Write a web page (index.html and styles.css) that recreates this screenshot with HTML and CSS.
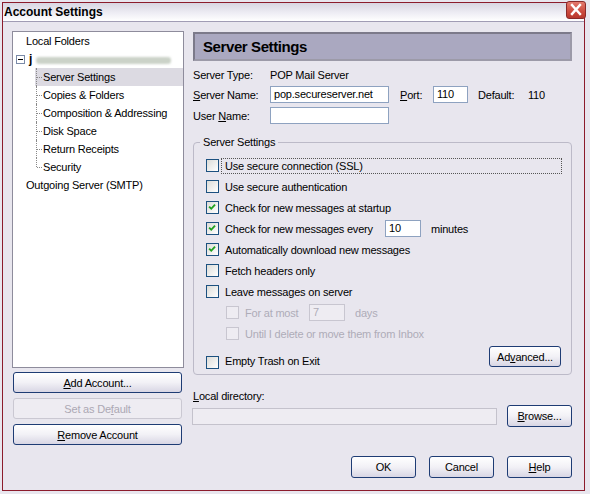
FILE: index.html
```html
<!DOCTYPE html>
<html>
<head>
<meta charset="utf-8">
<title>Account Settings</title>
<link rel="stylesheet" href="styles.css">
</head>
<body>
<div class="window">
   <!-- title bar -->
   <div class="titlebar">
      <span class="title">Account Settings</span>
      <span class="close">
         <svg viewBox="0 0 20 18" width="20" height="18">
            <path d="M6 4 L14 13 M14 4 L6 13" stroke="#fff" stroke-width="2.4" stroke-linecap="square"/>
         </svg>
      </span>
   </div>

   <div class="main">
      <!-- account tree -->
      <div class="leftcol">
         <div class="tree">
            <div class="treeitem top">Local Folders</div>
            <div class="treeitem account">
               <span class="minus"></span>
               <span class="acctname">j</span>
               <span class="redacted"></span>
            </div>
            <div class="subitem selected">Server Settings</div>
            <div class="subitem">Copies &amp; Folders</div>
            <div class="subitem">Composition &amp; Addressing</div>
            <div class="subitem">Disk Space</div>
            <div class="subitem">Return Receipts</div>
            <div class="subitem last">Security</div>
            <div class="treeitem top">Outgoing Server (SMTP)</div>
         </div>
         <button class="xpbutton side"><u>A</u>dd Account...</button>
         <button class="xpbutton side" disabled>Set as De<u>f</u>ault</button>
         <button class="xpbutton side"><u>R</u>emove Account</button>
      </div>

      <!-- settings pane -->
      <div class="rightcol">
         <div class="paneheader">Server Settings</div>

         <div class="formrow first">
            <span class="formlabel">Server Type:</span>
            <span>POP Mail Server</span>
         </div>
         <div class="formrow">
            <span class="formlabel"><u>S</u>erver Name:</span>
            <span class="textbox hostbox">pop.secureserver.net</span>
            <span class="portlabel"><u>P</u>ort:</span>
            <span class="textbox portbox">110</span>
            <span class="defaultlabel">Default:</span>
            <span>110</span>
         </div>
         <div class="formrow">
            <span class="formlabel">User <u>N</u>ame:</span>
            <span class="textbox hostbox"></span>
         </div>

         <fieldset class="group">
            <legend>Server Settings</legend>
            <div class="checkrows">
               <div class="checkrow">
                  <span class="cb"></span>
                  <span class="cblabel focused">Use secure connection (SSL)</span>
               </div>
               <div class="checkrow">
                  <span class="cb"></span>
                  <span class="cblabel">Use secure authentication</span>
               </div>
               <div class="checkrow">
                  <span class="cb checked"><svg viewBox="0 0 13 13" width="11" height="11"><path d="M2.5 5.5 L5 8 L9.5 3" fill="none" stroke="#21a121" stroke-width="2.2"/></svg></span>
                  <span class="cblabel">Check for new messages at startup</span>
               </div>
               <div class="checkrow">
                  <span class="cb checked"><svg viewBox="0 0 13 13" width="11" height="11"><path d="M2.5 5.5 L5 8 L9.5 3" fill="none" stroke="#21a121" stroke-width="2.2"/></svg></span>
                  <span class="cblabel everylabel">Check for new messages every</span>
                  <span class="textbox smallbox">10</span>
                  <span class="unit">minutes</span>
               </div>
               <div class="checkrow">
                  <span class="cb checked"><svg viewBox="0 0 13 13" width="11" height="11"><path d="M2.5 5.5 L5 8 L9.5 3" fill="none" stroke="#21a121" stroke-width="2.2"/></svg></span>
                  <span class="cblabel">Automatically download new messages</span>
               </div>
               <div class="checkrow">
                  <span class="cb"></span>
                  <span class="cblabel">Fetch headers only</span>
               </div>
               <div class="checkrow">
                  <span class="cb"></span>
                  <span class="cblabel">Leave messages on server</span>
               </div>
               <div class="checkrow indent disabled">
                  <span class="cb"></span>
                  <span class="cblabel atmostlabel">For at most</span>
                  <span class="textbox smallbox">7</span>
                  <span class="unit">days</span>
               </div>
               <div class="checkrow indent disabled">
                  <span class="cb"></span>
                  <span class="cblabel">Until I delete or move them from Inbox</span>
               </div>
               <div class="checkrow lastrow">
                  <span class="cb"></span>
                  <span class="cblabel">Empty Trash on Exit</span>
                  <button class="xpbutton advanced">Ad<u>v</u>anced...</button>
               </div>
            </div>
         </fieldset>

         <div class="dirlabel"><u>L</u>ocal directory:</div>
         <div class="dirrow">
            <span class="textbox dirbox"></span>
            <button class="xpbutton browse"><u>B</u>rowse...</button>
         </div>

         <div class="footer">
            <button class="xpbutton dlg">OK</button>
            <button class="xpbutton dlg">Cancel</button>
            <button class="xpbutton dlg"><u>H</u>elp</button>
         </div>
      </div>
   </div>
</div>
</body>
</html>
```
FILE: styles.css
```css
html,
body {
   margin: 0;
   padding: 0;
   height: 100%;
   overflow: hidden;
}

body {
   background: #e8e6ee;
   font-family: "Liberation Sans", Arial, sans-serif;
   font-size: 11px;
   letter-spacing: -0.2px;
   color: #000;
}

.window {
   box-sizing: border-box;
   margin: 2px 5px 0 2px;
   height: 489px;
   border: 1px solid #8c1c2c;
   display: flex;
   flex-direction: column;
}

/* title bar */
.titlebar {
   height: 18px;
   border-bottom: 1px solid #a09cb4;
   background: linear-gradient(#d8d6e2, #eeedf4 55%, #ffffff);
   display: flex;
   align-items: flex-start;
   justify-content: space-between;
}

.title {
   font-weight: bold;
   font-size: 12px;
   letter-spacing: 0;
   line-height: 16px;
   padding: 1px 0 0 1px;
}

.close {
   box-sizing: border-box;
   width: 20px;
   height: 18px;
   margin: -2px -2px 0 0;
   border: 1px solid #8a2a2a;
   border-radius: 3px;
   background: linear-gradient(#e47a6e, #cc4a3e 60%, #b8382e);
   display: flex;
}

.close svg {
   margin: -1px;
}

.main {
   flex: 1;
   display: flex;
   gap: 9px;
   padding: 9px 12px 0 9px;
}

/* left column */
.leftcol {
   width: 172px;
   display: flex;
   flex-direction: column;
}

.tree {
   box-sizing: border-box;
   height: 337px;
   background: #fff;
   border: 1px solid #8e8c9c;
   padding-top: 0;
}

.treeitem {
   height: 18px;
   line-height: 18px;
   padding-left: 13px;
   display: flex;
   align-items: center;
}

.account {
   padding-left: 3px;
}

.minus {
   box-sizing: border-box;
   width: 9px;
   height: 9px;
   border: 1px solid #7a8aa8;
   position: relative;
   margin-right: 4px;
}

.minus::after {
   content: "";
   position: absolute;
   left: 1px;
   right: 1px;
   top: 3px;
   height: 1px;
   background: #000;
}

.acctname {
   font-weight: bold;
   font-size: 12px;
}

.redacted {
   width: 135px;
   height: 7px;
   margin: 3px 0 0 4px;
   background: #cbd2c8;
   border-radius: 3px;
   filter: blur(0.8px);
}

.subitem {
   height: 18px;
   line-height: 18px;
   margin-left: 22px;
   padding-left: 8px;
   position: relative;
}

.subitem::before {
   content: "";
   position: absolute;
   left: 1px;
   top: 0;
   bottom: 0;
   border-left: 1px dotted #8a8a8a;
}

.subitem.last::before {
   bottom: 9px;
}

.subitem::after {
   content: "";
   position: absolute;
   left: 2px;
   width: 5px;
   top: 9px;
   border-top: 1px dotted #8a8a8a;
}

.subitem.selected {
   background: #dcdae2;
}

/* buttons */
.xpbutton {
   box-sizing: border-box;
   font-family: "Liberation Sans", Arial, sans-serif;
   font-size: 11px;
   letter-spacing: -0.2px;
   color: #000;
   border: 1px solid #1e3c74;
   border-radius: 3px;
   background: linear-gradient(#ffffff, #f2f1f6 50%, #d8d6e4);
   padding: 0;
   height: 21px;
}

.xpbutton:disabled {
   color: #aca8b4;
   border-color: #cac8d2;
   background: #eeecf2;
}

.side {
   margin: 5px 2px 0 1px;
}

.side:first-of-type {
   margin-top: 4px;
}

/* right column */
.rightcol {
   flex: 1;
   display: flex;
   flex-direction: column;
}

.paneheader {
   box-sizing: border-box;
   margin-top: 1px;
   height: 29px;
   border: 2px solid #7c7a8a;
   border-right-color: #9c9aa8;
   border-bottom-color: #9c9aa8;
   background: #aaa8c0;
   font-weight: bold;
   font-size: 15px;
   letter-spacing: -0.4px;
   line-height: 25px;
   padding-left: 8px;
}

.formrow {
   display: flex;
   align-items: center;
   height: 17px;
   margin-top: 3px;
}

.formrow.first {
   height: 16px;
   margin-top: 6px;
}

.formrow + .formrow + .formrow {
   margin-top: 4px;
}

.formlabel {
   width: 77px;
}

.textbox {
   box-sizing: border-box;
   height: 17px;
   border: 1px solid #8ea2c0;
   background: #fff;
   padding-left: 3px;
   line-height: 15px;
   font-size: 11px;
}

.hostbox {
   width: 119px;
}

.portlabel {
   margin-left: 11px;
   width: 33px;
}

.portbox {
   width: 35px;
}

.defaultlabel {
   margin-left: 10px;
   width: 50px;
}

/* group box */
.group {
   margin: 11px 0 0 0;
   padding: 0 9px 7px 6px;
   border: 1px solid #bcbac8;
   border-radius: 4px;
}

.group legend {
   padding: 0 3px;
   line-height: 14px;
}

.checkrows {
   margin-top: 6px;
   padding-left: 6px;
}

.checkrow {
   display: flex;
   align-items: center;
   height: 21px;
}

.cb {
   box-sizing: border-box;
   width: 13px;
   height: 13px;
   border: 1px solid #1c5180;
   background: linear-gradient(135deg, #dcdcd8, #ffffff);
   margin-right: 2px;
   display: flex;
   align-items: center;
   justify-content: center;
   flex: none;
}

.cblabel {
   padding: 0 3px;
   border: 1px dotted transparent;
   line-height: 14px;
}

.cblabel.focused {
   flex: 1;
   border-color: #555;
}

.everylabel {
   width: 156px;
}

.smallbox {
   width: 36px;
}

.unit {
   margin-left: 10px;
}

.indent {
   padding-left: 20px;
}

.disabled {
   color: #aeacb8;
}

.disabled .cb {
   border-color: #c8c6d0;
   background: #eeecf2;
}

.disabled .textbox {
   border-color: #c8c6d0;
   background: #eeecf2;
   color: #aeacb8;
}

.atmostlabel {
   width: 60px;
}

.lastrow {
   align-items: flex-end;
   margin-top: 2px;
}

.lastrow .cb,
.lastrow .cblabel {
   margin-bottom: -2px;
}

.advanced {
   margin-left: auto;
   margin-right: 1px;
   width: 72px;
}

/* local directory */
.dirlabel {
   margin-top: 14px;
   line-height: 14px;
}

.dirrow {
   display: flex;
   align-items: center;
   gap: 10px;
   margin-top: 2px;
}

.dirbox {
   flex: 1;
   margin-left: -1px;
   border-color: #c4c2cc;
   background: #eeecf2;
}

.browse,
.dlg {
   width: 65px;
   height: 22px;
}

.footer {
   display: flex;
   justify-content: flex-end;
   gap: 13px;
   margin-top: 29px;
}
```
